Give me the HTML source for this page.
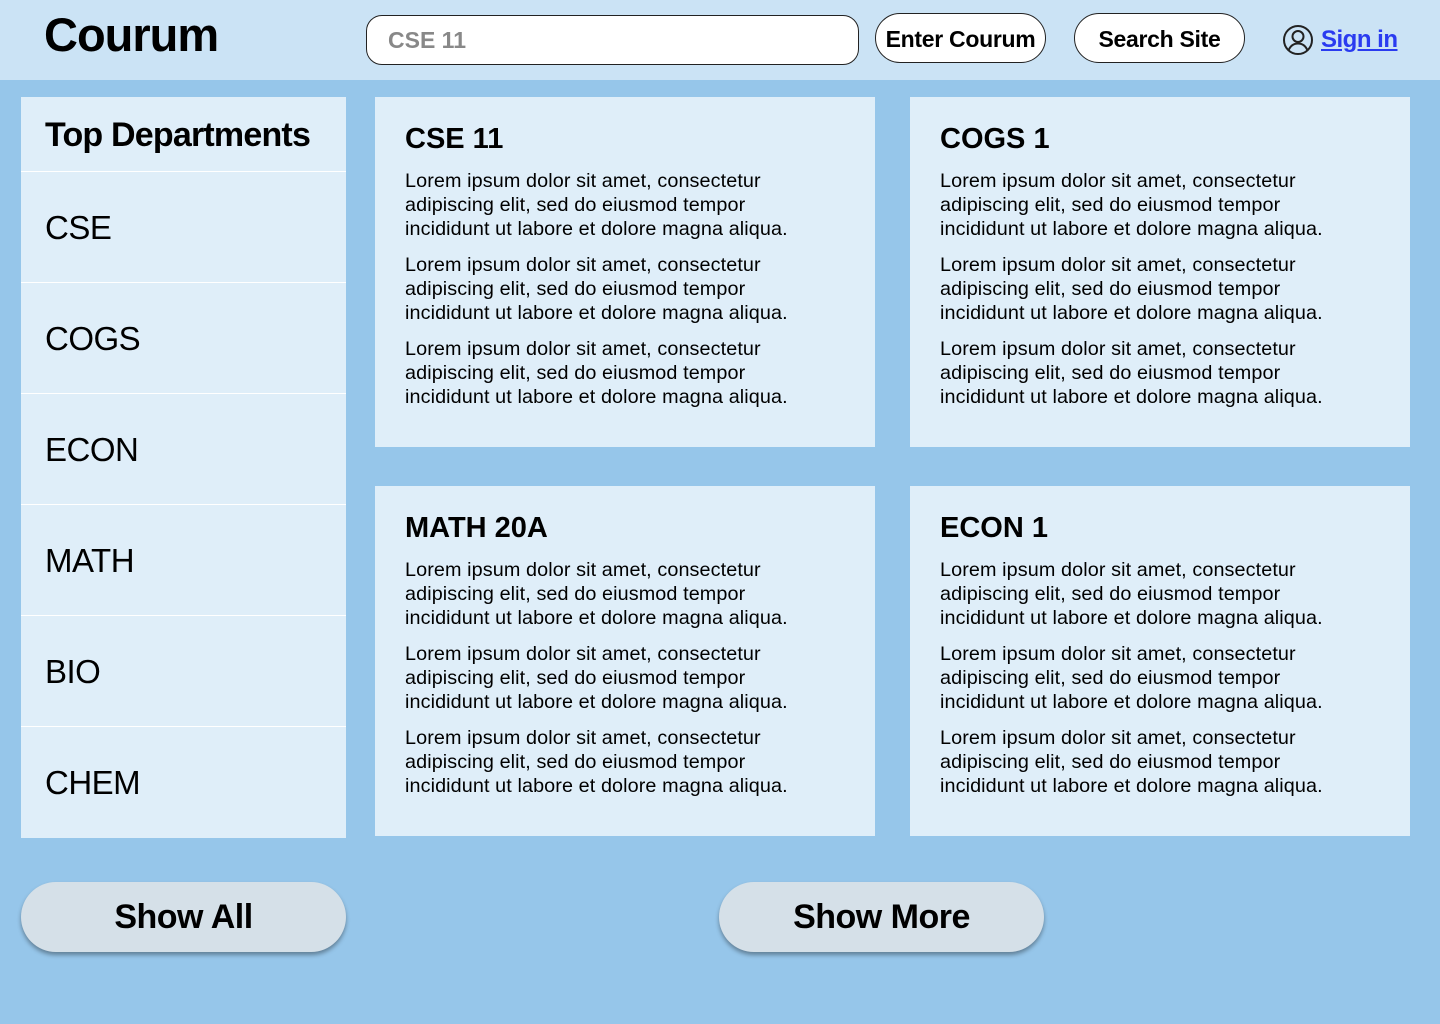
<!DOCTYPE html>
<html><head><meta charset="utf-8"><style>
*{margin:0;padding:0;box-sizing:border-box}
body{width:1440px;height:1024px;background:#96c6ea;font-family:"Liberation Sans",Arial,sans-serif;position:relative;overflow:hidden;color:#000}
.hdr{position:absolute;left:0;top:0;width:1440px;height:80px;background:#cbe3f5}
.logo{position:absolute;left:44px;top:7px;font-size:47px;font-weight:bold;letter-spacing:-1px}
.search{position:absolute;left:366px;top:15px;width:493px;height:50px;border:1.5px solid #222;border-radius:16px;background:#fff;font-size:23px;font-weight:bold;color:#888;padding:11px 0 0 21px}
.pill{position:absolute;top:13px;height:50px;border:1.5px solid #222;border-radius:25px;background:#fff;font-size:23px;font-weight:bold;text-align:center;line-height:51px;letter-spacing:-0.3px}
.sign{position:absolute;left:1321px;top:26px;font-size:24px;font-weight:bold;color:#2a3bf0;text-decoration:underline;letter-spacing:-0.5px}
.side{position:absolute;left:21px;top:97px;width:325px;height:741px;background:#dfeef9}
.side div{height:111px;border-top:1px solid #fff;font-size:33px;padding:37px 0 0 24px;letter-spacing:-0.5px}
.side .t{height:74px;border:none;font-weight:bold;font-size:34px;padding:19px 0 0 24px;letter-spacing:-0.8px}
.card{position:absolute;width:500px;height:350px;background:#dfeef9;padding:26px 0 0 30px}
.card h2{font-size:29px;font-weight:bold;margin-bottom:13px;letter-spacing:0}
.card p{font-size:19.8px;line-height:24px;margin-bottom:12px;white-space:nowrap;letter-spacing:0.1px}
.btn{position:absolute;top:882px;width:325px;height:70px;border-radius:35px;background:#d5e0e8;box-shadow:0 3px 4px rgba(0,0,0,.35);font-size:34px;font-weight:bold;text-align:center;line-height:70px;letter-spacing:-0.5px}
</style></head><body>
<div class="hdr">
<div class="logo">Courum</div>
<div class="search">CSE 11</div>
<div class="pill" style="left:875px;width:171px">Enter Courum</div>
<div class="pill" style="left:1074px;width:171px">Search Site</div>
<svg style="position:absolute;left:1282px;top:24px" width="32" height="32" viewBox="0 0 32 32" fill="none" stroke="#222" stroke-width="2"><circle cx="16" cy="16" r="14"/><circle cx="16" cy="12.5" r="5.5"/><path d="M6.5 26.5c2-5 5.5-7 9.5-7s7.5 2 9.5 7"/></svg>
<div class="sign">Sign in</div>
</div>
<div class="side">
<div class="t">Top Departments</div>
<div>CSE</div><div>COGS</div><div>ECON</div><div>MATH</div><div>BIO</div><div>CHEM</div>
</div>
<div class="card" style="left:375px;top:97px"><h2>CSE 11</h2>
<p>Lorem ipsum dolor sit amet, consectetur<br>adipiscing elit, sed do eiusmod tempor<br>incididunt ut labore et dolore magna aliqua.</p>
<p>Lorem ipsum dolor sit amet, consectetur<br>adipiscing elit, sed do eiusmod tempor<br>incididunt ut labore et dolore magna aliqua.</p>
<p>Lorem ipsum dolor sit amet, consectetur<br>adipiscing elit, sed do eiusmod tempor<br>incididunt ut labore et dolore magna aliqua.</p></div>
<div class="card" style="left:910px;top:97px"><h2>COGS 1</h2>
<p>Lorem ipsum dolor sit amet, consectetur<br>adipiscing elit, sed do eiusmod tempor<br>incididunt ut labore et dolore magna aliqua.</p>
<p>Lorem ipsum dolor sit amet, consectetur<br>adipiscing elit, sed do eiusmod tempor<br>incididunt ut labore et dolore magna aliqua.</p>
<p>Lorem ipsum dolor sit amet, consectetur<br>adipiscing elit, sed do eiusmod tempor<br>incididunt ut labore et dolore magna aliqua.</p></div>
<div class="card" style="left:375px;top:486px"><h2>MATH 20A</h2>
<p>Lorem ipsum dolor sit amet, consectetur<br>adipiscing elit, sed do eiusmod tempor<br>incididunt ut labore et dolore magna aliqua.</p>
<p>Lorem ipsum dolor sit amet, consectetur<br>adipiscing elit, sed do eiusmod tempor<br>incididunt ut labore et dolore magna aliqua.</p>
<p>Lorem ipsum dolor sit amet, consectetur<br>adipiscing elit, sed do eiusmod tempor<br>incididunt ut labore et dolore magna aliqua.</p></div>
<div class="card" style="left:910px;top:486px"><h2>ECON 1</h2>
<p>Lorem ipsum dolor sit amet, consectetur<br>adipiscing elit, sed do eiusmod tempor<br>incididunt ut labore et dolore magna aliqua.</p>
<p>Lorem ipsum dolor sit amet, consectetur<br>adipiscing elit, sed do eiusmod tempor<br>incididunt ut labore et dolore magna aliqua.</p>
<p>Lorem ipsum dolor sit amet, consectetur<br>adipiscing elit, sed do eiusmod tempor<br>incididunt ut labore et dolore magna aliqua.</p></div>
<div class="btn" style="left:21px">Show All</div>
<div class="btn" style="left:719px">Show More</div>
</body></html>
